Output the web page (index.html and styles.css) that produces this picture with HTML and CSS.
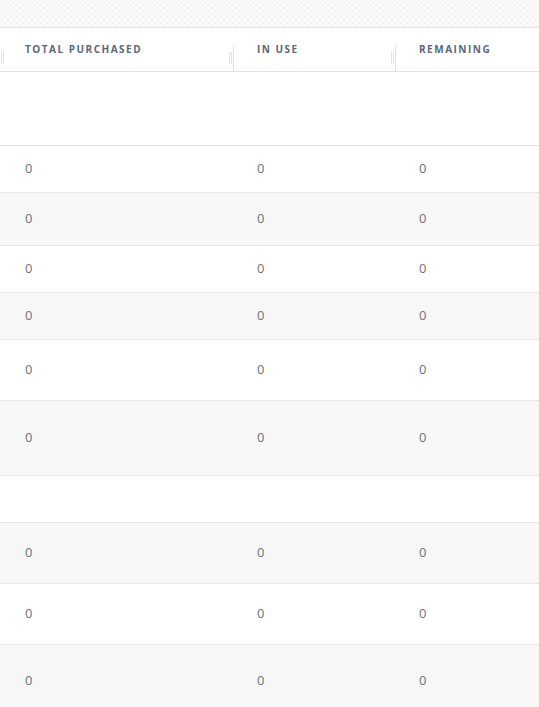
FILE: index.html
```html
<!DOCTYPE html>
<html>
<head>
<meta charset="utf-8">
<link rel="stylesheet" href="styles.css">
</head>
<body>
<div class="strip"></div>
<table class="grid">
  <colgroup>
    <col class="c1"><col class="c2"><col class="c3">
  </colgroup>
  <thead>
    <tr class="head">
      <th class="first"><span>TOTAL PURCHASED</span></th>
      <th><span>IN USE</span></th>
      <th><span>REMAINING</span></th>
    </tr>
  </thead>
  <tbody>
    <tr class="h73"><td></td><td></td><td></td></tr>
    <tr class="h46"><td>0</td><td>0</td><td>0</td></tr>
    <tr class="h52 alt"><td>0</td><td>0</td><td>0</td></tr>
    <tr class="h46"><td>0</td><td>0</td><td>0</td></tr>
    <tr class="h46 alt"><td>0</td><td>0</td><td>0</td></tr>
    <tr class="h60"><td>0</td><td>0</td><td>0</td></tr>
    <tr class="h74 alt"><td>0</td><td>0</td><td>0</td></tr>
    <tr class="h46"><td></td><td></td><td></td></tr>
    <tr class="h60 alt"><td>0</td><td>0</td><td>0</td></tr>
    <tr class="h60"><td>0</td><td>0</td><td>0</td></tr>
    <tr class="h72 alt"><td>0</td><td>0</td><td>0</td></tr>
  </tbody>
</table>
</body>
</html>
```
FILE: styles.css
```css
html, body {
  margin: 0;
  padding: 0;
  background: #fff;
  overflow: hidden;
}
body {
  font-family: "Open Sans", "Liberation Sans", sans-serif;
  width: 539px;
  height: 707px;
}
.strip {
  height: 27px;
  border-bottom: 1px solid #e3e3e3;
  background-color: #fbfbfb;
  background-image:
    radial-gradient(circle at 2px 2px, #f1f1f1 1.2px, transparent 1.6px),
    radial-gradient(circle at 5px 5px, #f3f3f3 1.2px, transparent 1.6px);
  background-size: 6px 6px, 6px 6px;
}
.grid {
  border-collapse: collapse;
  table-layout: fixed;
  width: 560px;
}
.c1 { width: 234px; }
.c2 { width: 162px; }
.c3 { width: 164px; }
.head th {
  position: relative;
  height: 41px;
  padding: 0 0 2px 23px;
  text-align: left;
  vertical-align: middle;
  font-size: 10px;
  font-weight: 700;
  letter-spacing: 1.5px;
  color: #5c6678;
  border-bottom: 1px solid #e3e3e3;
  white-space: nowrap;
}
.head th.first { padding-left: 25px; }
.head th::before {
  content: "";
  position: absolute;
  left: -1px;
  top: 17px;
  width: 1px;
  height: 27px;
  background: #e2e2e2;
}
.head th::after {
  content: "";
  position: absolute;
  left: -5px;
  top: 24px;
  width: 3px;
  height: 12px;
  border-left: 1px solid #e4e4e4;
  border-right: 1px solid #e4e4e4;
  box-sizing: border-box;
}
.head th.first::before { left: 3px; top: 23px; height: 13px; }
.head th.first::after { left: 1px; top: 24px; width: 1px; border-right: 0; }
tbody td {
  padding: 0 0 2px 23px;
  font-size: 13px;
  color: #727272;
  vertical-align: middle;
  border-bottom: 1px solid #e6e6e6;
}
tbody td:first-child { padding-left: 25px; }
tbody tr.alt td { background: #f7f7f7; }
.h46 td { height: 44px; }
.h52 td { height: 50px; }
.h60 td { height: 58px; }
.h72 td { height: 70px; }
.h73 td { height: 71px; }
.h74 td { height: 72px; }
```
